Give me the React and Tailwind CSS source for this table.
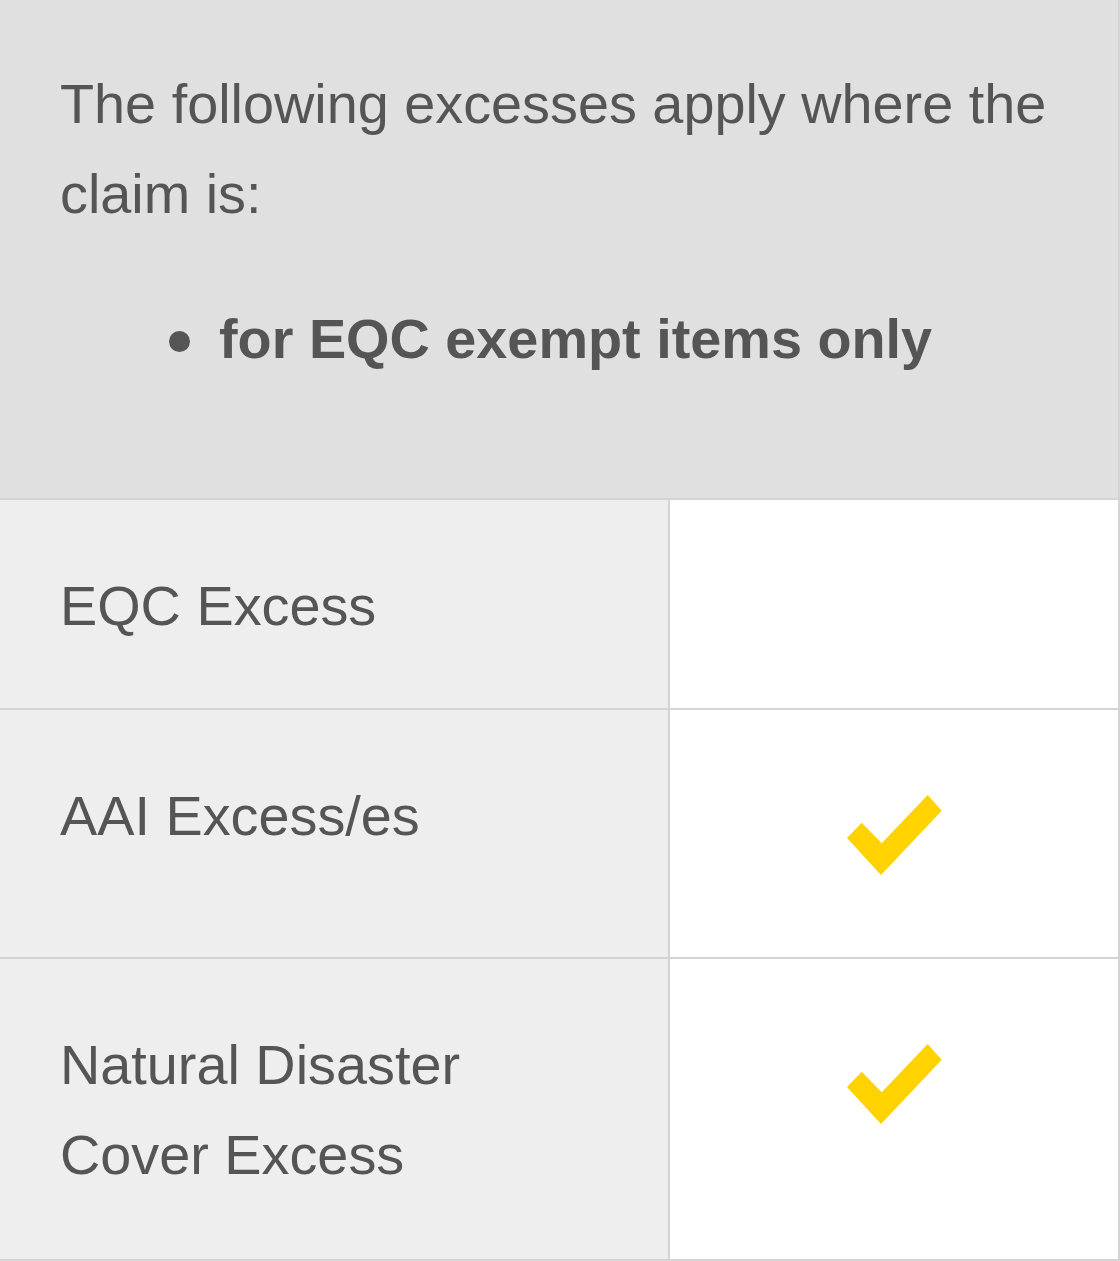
import React from "react";

function Check() {
  return (
    <svg width="95" height="80" viewBox="0 0 95 80" className="block">
      <polygon
        points="0,43 14.7,27.7 34.7,48.3 80.7,0 94.7,15.7 34,80"
        fill="#ffd200"
      />
    </svg>
  );
}

function Row({ height, label, check }) {
  return (
    <div className="flex border-b-2 border-[#d4d4d4]" style={{ height }}>
      <div className="w-[670px] shrink-0 bg-[#eeeeee] border-r-2 border-[#d4d4d4] pl-[60px] pr-[60px] pt-[61px]">
        {label}
      </div>
      <div className="flex-1 bg-white border-r-2 border-[#d4d4d4] flex justify-center pt-[85px]">
        {check ? <Check /> : null}
      </div>
    </div>
  );
}

export default function App() {
  return (
    <div
      className="w-[1120px] h-[1261px] bg-white text-[#555555] text-[55.8px] leading-[90px] overflow-hidden"
      style={{ fontFamily: '"Liberation Sans", Arial, sans-serif' }}
    >
      <div className="h-[500px] bg-[#e0e0e0] border-r-2 border-b-2 border-[#d4d4d4] pl-[60px] pr-[60px] pt-[59px]">
        <p>The following excesses apply where the claim is:</p>
        <div className="mt-[55px] flex font-bold">
          <span className="ml-[109px] mt-[37px] w-[21px] h-[21px] rounded-full bg-[#555555] shrink-0"></span>
          <span className="ml-[29px]">for EQC exempt items only</span>
        </div>
      </div>
      <Row height={210} label="EQC Excess" check={false} />
      <Row height={249} label="AAI Excess/es" check={true} />
      <Row
        height={302}
        label={
          <>
            Natural Disaster
            <br />
            Cover Excess
          </>
        }
        check={true}
      />
    </div>
  );
}
